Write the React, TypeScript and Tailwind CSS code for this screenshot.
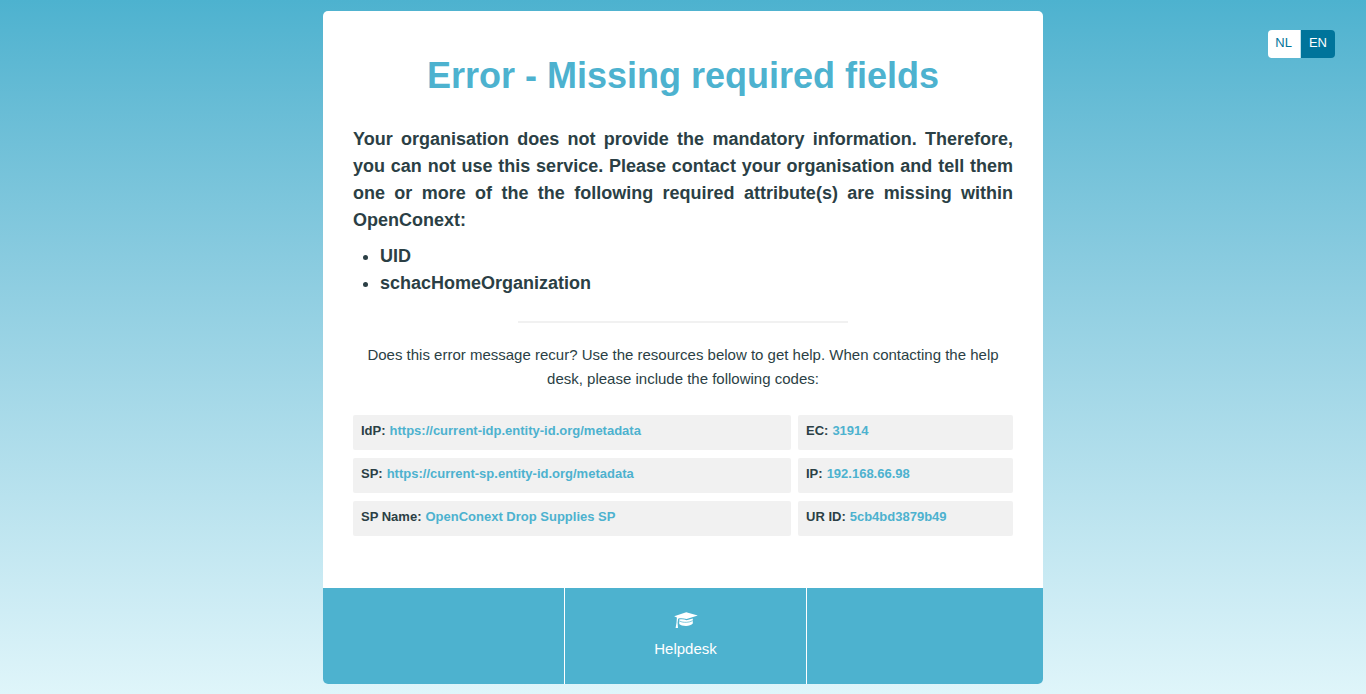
type Code = { label: string; value: string };

const codes: Code[] = [
  { label: 'IdP:', value: 'https://current-idp.entity-id.org/metadata' },
  { label: 'EC:', value: '31914' },
  { label: 'SP:', value: 'https://current-sp.entity-id.org/metadata' },
  { label: 'IP:', value: '192.168.66.98' },
  { label: 'SP Name:', value: 'OpenConext Drop Supplies SP' },
  { label: 'UR ID:', value: '5cb4bd3879b49' },
];

const missingAttributes = ['UID', 'schacHomeOrganization'];

function GraduationCap() {
  return (
    <svg viewBox="0 0 24 17" className="h-[17px] w-6" fill="currentColor" aria-hidden="true">
      <path d="M12.2 0.3 23.8 3.4 12.6 7.1C9.5 6.2 6.3 6 4.1 6.7L3.6 10.8 4 16H1.6L2.5 10.8 2.9 5.6 0.2 4.3Z" />
      <path d="M5.2 7.6C8 7 10.5 7.4 12.6 8.3L18.8 6.4V11.6C17.6 13.2 14.8 14 12 14 9 14 6.4 13.2 5.2 12Z" />
      <path
        d="M5.2 8.9C7.8 10.2 10 10.4 12.6 10.3 15 10.2 17 9.6 18.8 8.6"
        fill="none"
        stroke="#4db2cf"
        strokeWidth="0.7"
      />
    </svg>
  );
}

function LanguageSwitch() {
  return (
    <nav
      aria-label="Language"
      className="mt-[19px] mr-[31px] flex h-7 justify-self-end overflow-hidden rounded text-[13px] leading-[26px]"
    >
      <a href="?lang=nl" className="border-r border-[#b9dfeb] bg-white pr-2 pl-[7px] text-[#00749b]">
        NL
      </a>
      <a href="?lang=en" aria-current="true" className="bg-[#00749b] px-2 text-white">
        EN
      </a>
    </nav>
  );
}

function CodeList() {
  return (
    <dl className="mt-6 grid grid-cols-[438fr_215fr] gap-x-[7px] gap-y-2 text-[13px] leading-5 font-bold">
      {codes.map((code) => (
        <div key={code.label} className="flex h-[35px] gap-1 rounded-xs bg-[#f1f1f1] px-2 pt-[6px]">
          <dt>{code.label}</dt>
          <dd className="text-[#4db2cf]">{code.value}</dd>
        </div>
      ))}
    </dl>
  );
}

export default function App() {
  return (
    <div className="grid min-h-screen grid-cols-[1fr_minmax(0,720px)_1fr] items-start bg-linear-to-b from-[#4db2cf] to-[#dff5fa] pt-[11px] pb-[10px] font-['Helvetica','Liberation_Sans',sans-serif] text-[#2b3f45]">
      <main className="col-start-2 overflow-hidden rounded-[5px] bg-white">
        <div className="px-[30px] pt-[38px] pb-[52px]">
          <h1 className="text-center text-[36px] leading-[54px] font-bold text-[#4db2cf]">
            Error - Missing required fields
          </h1>
          <div className="mt-[23px] text-lg leading-[27px] font-bold">
            <p className="text-justify">
              Your organisation does not provide the mandatory information. Therefore, you can not use
              this service. Please contact your organisation and tell them one or more of the the
              following required attribute(s) are missing within OpenConext:
            </p>
            <ul className="mt-[9px] list-disc pl-[27px]">
              {missingAttributes.map((name) => (
                <li key={name}>{name}</li>
              ))}
            </ul>
          </div>
          <hr className="mx-auto mt-6 w-1/2 border-t-2 border-[#f1f1f1]" />
          <p className="mt-5 text-center text-[15px] leading-6">
            Does this error message recur? Use the resources below to get help. When contacting the
            help desk, please include the following codes:
          </p>
          <CodeList />
        </div>
        <footer className="grid h-24 grid-cols-[242fr_242fr_236fr] bg-[#4db2cf] text-white">
          <div className="border-r border-white" />
          <div className="border-r border-white">
            <a href="#helpdesk" className="flex h-full flex-col items-center pt-6 text-[15px] leading-6">
              <GraduationCap />
              <span className="mt-2">Helpdesk</span>
            </a>
          </div>
          <div />
        </footer>
      </main>
      <LanguageSwitch />
    </div>
  );
}
